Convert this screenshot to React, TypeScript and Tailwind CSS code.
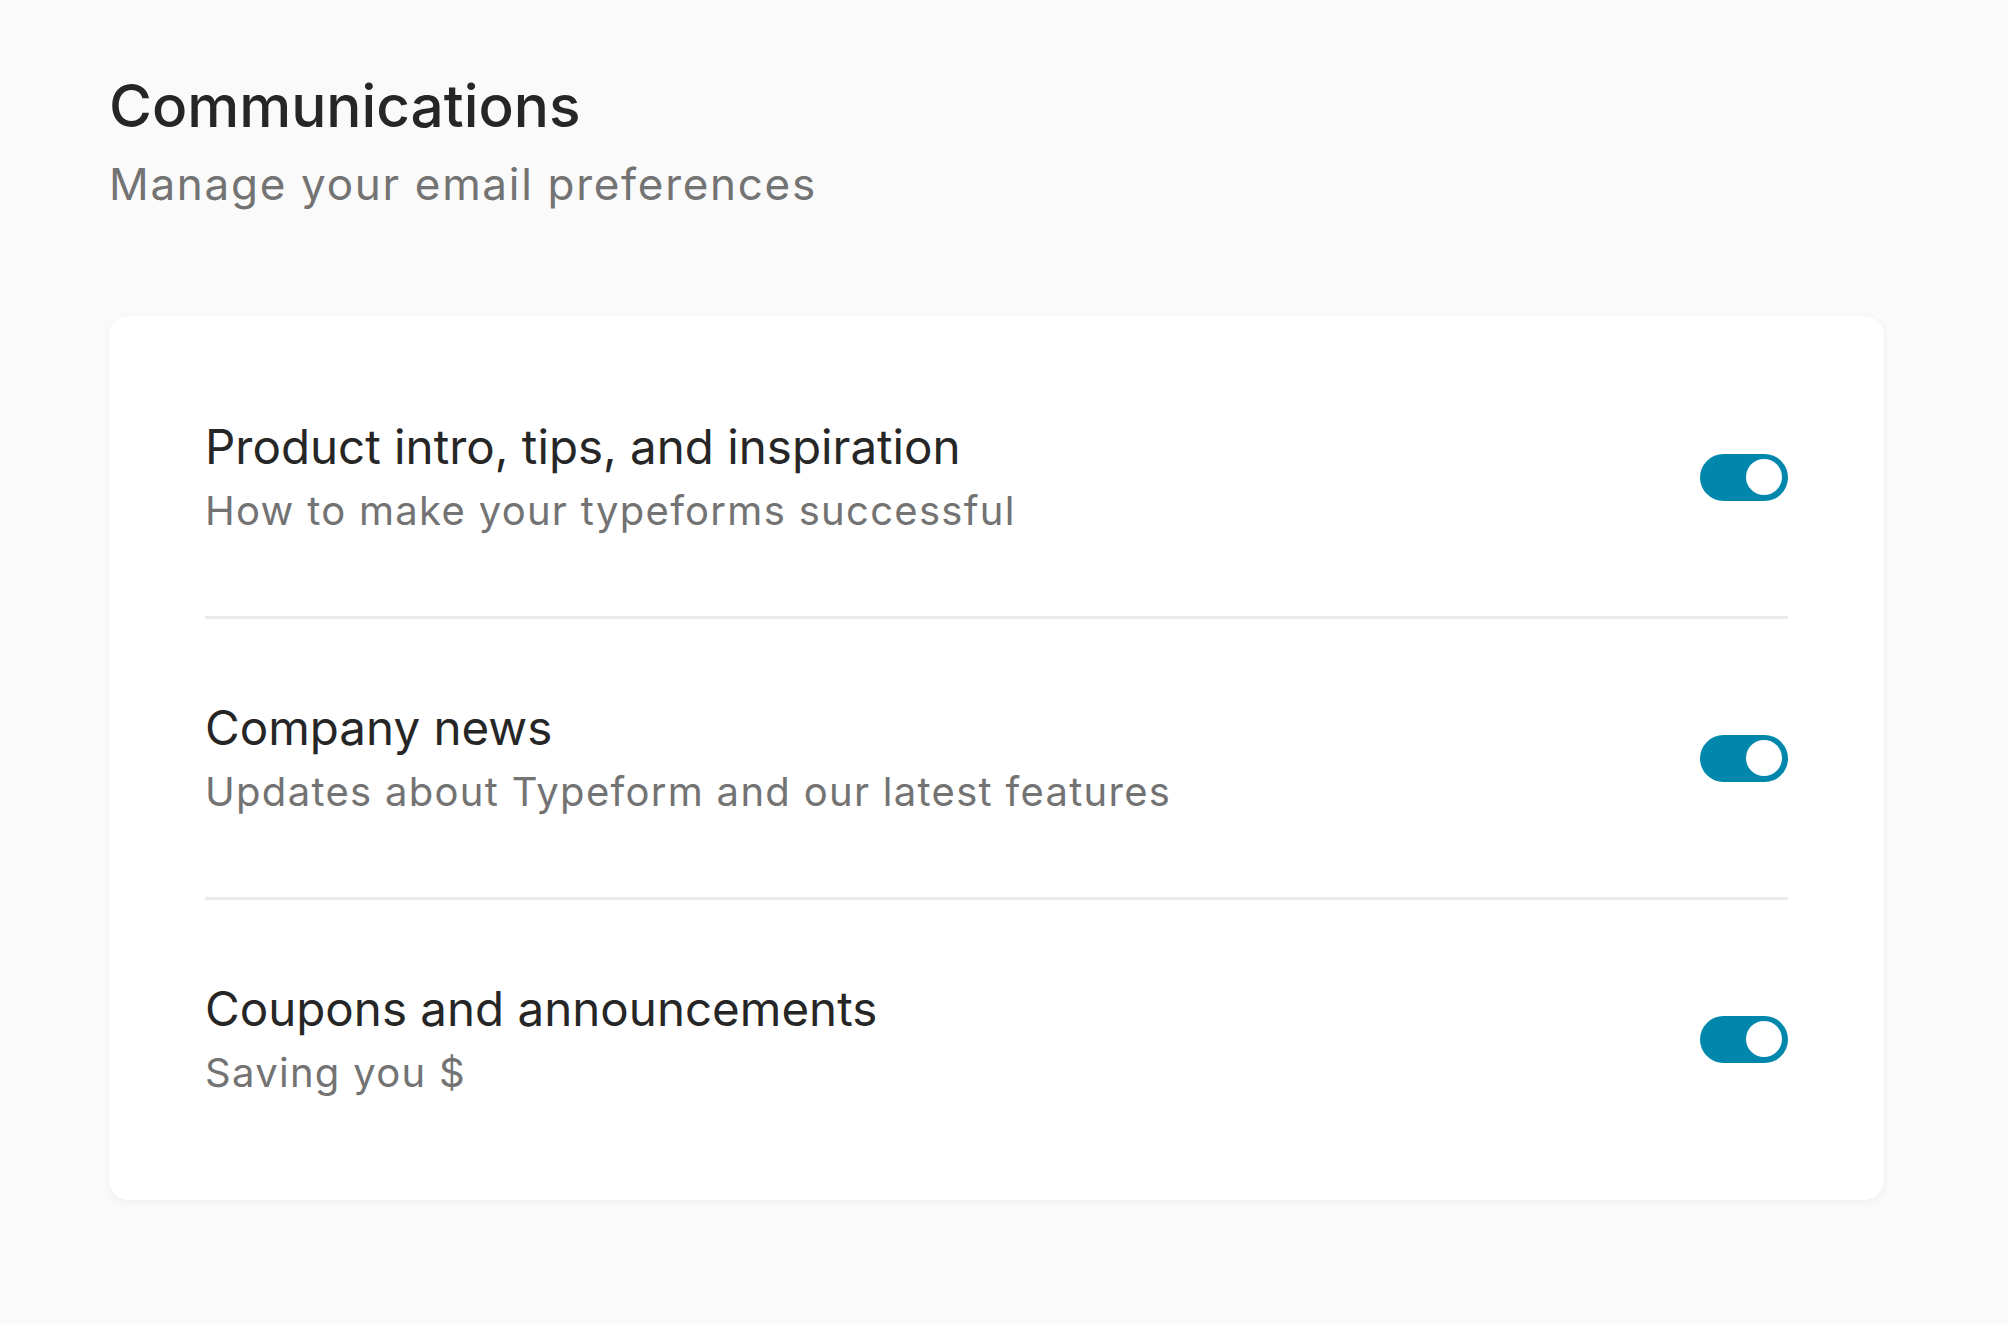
const items = [
  { title: 'Product intro, tips, and inspiration', desc: 'How to make your typeforms successful' },
  { title: 'Company news', desc: 'Updates about Typeform and our latest features' },
  { title: 'Coupons and announcements', desc: 'Saving you $' },
];

function Toggle() {
  return (
    <button
      type="button"
      role="switch"
      aria-checked="true"
      className="flex h-[47px] w-[88px] shrink-0 items-center justify-end rounded-full bg-[#0187ab] pr-[6px]"
    >
      <span className="block h-[36px] w-[36px] rounded-full bg-white" />
    </button>
  );
}

export default function App() {
  return (
    <div className="min-h-screen bg-[#fafafa] px-[109px] pt-[66px] font-['Inter',sans-serif]">
      {/* Header */}
      <h1 className="text-[58.5px] leading-[80px] font-medium text-[#262626]">Communications</h1>
      <p className="mt-[8px] text-[44px] leading-[60px] text-[#737373] tracking-[1.7px]">Manage your email preferences</p>

      {/* Card */}
      <div className="mt-[102px] w-[1775px] rounded-[20px] bg-white px-[96px] py-[22px] shadow-[0_2px_8px_rgba(0,0,0,0.05)]">
        {items.map((item, i) => (
          <div key={item.title}>
            {i > 0 && <div className="h-[3px] bg-[#ebebeb]" />}
            <div className="flex h-[278px] items-center justify-between">
              <div>
                <div className="text-[47.5px] leading-[64px] text-[#262626]">{item.title}</div>
                <div className="mt-[4px] text-[40px] leading-[56px] text-[#737373] tracking-[1.3px]">{item.desc}</div>
              </div>
              <Toggle />
            </div>
          </div>
        ))}
      </div>
    </div>
  );
}
